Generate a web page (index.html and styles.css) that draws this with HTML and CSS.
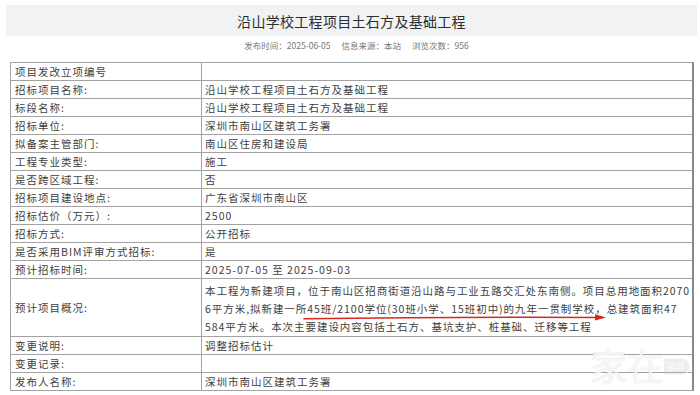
FILE: index.html
```html
<!DOCTYPE html>
<html lang="zh-CN">
<head>
<meta charset="utf-8">
<title>沿山学校工程项目土石方及基础工程</title>
<link rel="stylesheet" href="styles.css">
</head>
<body>
<div class="page">
  <div class="title-bar"><h1 class="title">沿山学校工程项目土石方及基础工程</h1></div>
  <div class="meta">
    <span>发布时间：2025-06-05</span>
    <span>信息来源：本站</span>
    <span>浏览次数：956</span>
  </div>
  <div class="table-wrap">
    <table class="info">
      <tr><td class="k">项目发改立项编号</td><td class="v"></td></tr>
      <tr><td class="k">招标项目名称:</td><td class="v">沿山学校工程项目土石方及基础工程</td></tr>
      <tr><td class="k">标段名称:</td><td class="v">沿山学校工程项目土石方及基础工程</td></tr>
      <tr><td class="k">招标单位:</td><td class="v">深圳市南山区建筑工务署</td></tr>
      <tr><td class="k">拟备案主管部门:</td><td class="v">南山区住房和建设局</td></tr>
      <tr><td class="k">工程专业类型:</td><td class="v">施工</td></tr>
      <tr><td class="k">是否跨区域工程:</td><td class="v">否</td></tr>
      <tr><td class="k">招标项目建设地点:</td><td class="v">广东省深圳市南山区</td></tr>
      <tr><td class="k">招标估价（万元）:</td><td class="v">2500</td></tr>
      <tr><td class="k">招标方式:</td><td class="v">公开招标</td></tr>
      <tr><td class="k">是否采用BIM评审方式招标:</td><td class="v">是</td></tr>
      <tr><td class="k">预计招标时间:</td><td class="v">2025-07-05 至 2025-09-03</td></tr>
      <tr class="tall"><td class="k">预计项目概况:</td><td class="v"><span class="ln">本工程为新建项目，位于南山区招商街道沿山路与工业五路交汇处东南侧。项目总用地面积2070</span><br><span class="ln">6平方米,拟新建一所45班/2100学位(30班小学、15班初中)的九年一贯制学校，总建筑面积47</span><br><span class="ln">584平方米。本次主要建设内容包括土石方、基坑支护、桩基础、迁移等工程</span></td></tr>
      <tr><td class="k">变更说明:</td><td class="v">调整招标估计</td></tr>
      <tr><td class="k">变更记录:</td><td class="v"></td></tr>
      <tr><td class="k">发布人名称:</td><td class="v">深圳市南山区建筑工务署</td></tr>
    </table>
    <svg class="arrow" width="310" height="12" viewBox="0 0 310 12">
      <path d="M2 6.8 Q150 4.6 300 5.4" fill="none" stroke="#d8281e" stroke-width="1.5" stroke-linecap="round"/>
      <path d="M293 2.2 L304 5.4 L293 8.6 Z" fill="#d8281e"/>
    </svg>
    <div class="watermark">
      <span class="wm-big">家在</span>
      <span class="wm-box">深圳</span>
    </div>
    <div class="wm-dots"></div>
  </div>
</div>
</body>
</html>
```
FILE: styles.css
```css
html, body {
  margin: 0;
  padding: 0;
  background: #ffffff;
}
body {
  font-family: "Noto Sans CJK SC", "Noto Sans", sans-serif;
  color: #3c3c3c;
}
.page {
  padding: 5px 3px 0 6px;
}
.title-bar {
  background: #f1f2f4;
  height: 31px;
  display: flex;
  align-items: center;
  justify-content: center;
}
.title {
  margin: 0;
  font-size: 14px;
  font-weight: 400;
  letter-spacing: 0.3px;
  color: #2e2e2e;
  line-height: 1;
}
.meta {
  display: flex;
  justify-content: center;
  gap: 11px;
  font-size: 8.5px;
  color: #777;
  height: 18px;
  line-height: 18px;
  padding-left: 10px;
}
.table-wrap {
  position: relative;
  margin-top: 8px;
  margin-left: 4px;
  width: 684px;
}
.info {
  width: 684px;
  border-collapse: collapse;
  table-layout: fixed;
  border: 1px solid #8f8f8f;
  border-right: 2px solid #8a8a8a;
}
.info td {
  border: 1px solid #a3a3a3;
  height: 17px;
  padding: 0 0 0 4px;
  font-size: 10.5px;
  letter-spacing: 1px;
  line-height: 17px;
  color: #3e3e3e;
  vertical-align: middle;
  white-space: nowrap;
  overflow: hidden;
}
.info td.k {
  width: 186px;
}
.info td.v {
  padding-left: 3px;
}
.info tr.tall td {
  height: 55px;
}
.info tr.tall td.v {
  line-height: 18px;
  letter-spacing: 0.95px;
  padding-top: 2px;
}
.arrow {
  position: absolute;
  left: 292px;
  top: 250px;
}
.watermark {
  position: absolute;
  right: 4px;
  top: 285px;
  display: flex;
  align-items: center;
  pointer-events: none;
}
.wm-big {
  font-size: 37px;
  letter-spacing: 0;
  color: rgba(255, 255, 255, 0.82);
  text-shadow: 0 0 1px rgba(140, 140, 140, 0.4);
  line-height: 1;
}
.wm-box {
  font-size: 9px;
  line-height: 1;
  color: rgba(255, 255, 255, 0.9);
  background: rgba(190, 190, 190, 0.28);
  border: 1px solid rgba(255, 255, 255, 0.7);
  border-left: none;
  border-radius: 0 8px 8px 0;
  padding: 3px 5px 3px 2px;
  margin-top: 2px;
}
.wm-dots {
  position: absolute;
  right: 4px;
  top: 328px;
  width: 86px;
  border-top: 1px dotted rgba(160, 160, 160, 0.5);
}
```
